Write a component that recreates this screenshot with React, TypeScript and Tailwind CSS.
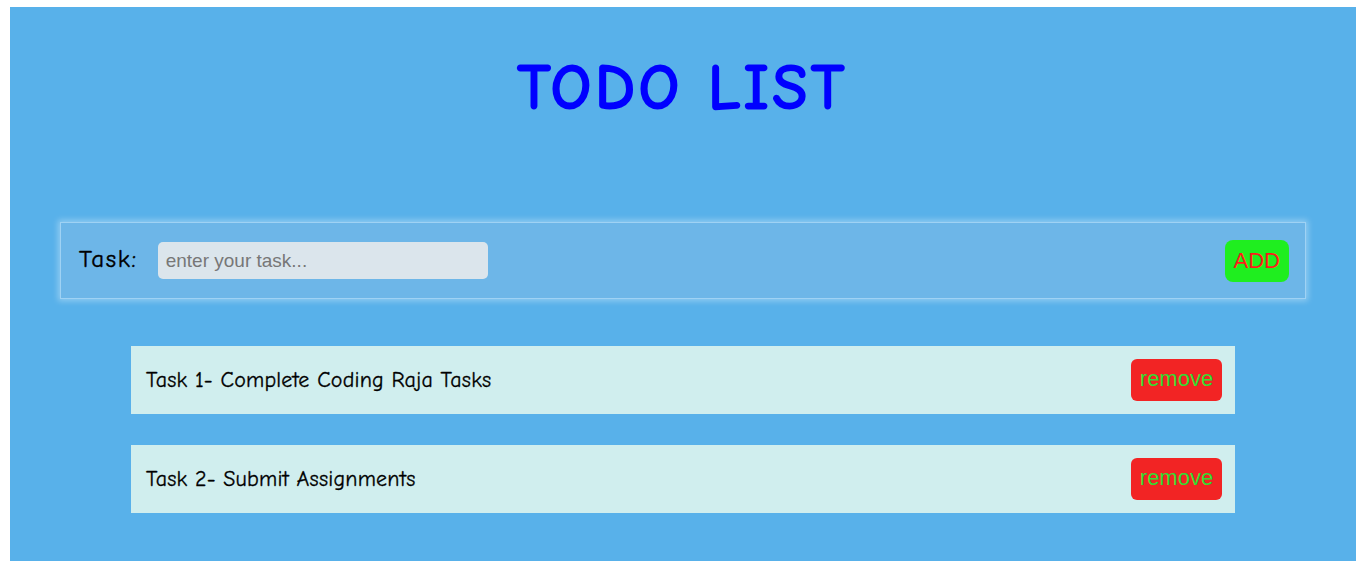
const tasks = ["Task 1- Complete Coding Raja Tasks", "Task 2- Submit Assignments"]

const comic = "font-['Comic_Sans_MS','Comic_Neue',cursive]"

export default function App() {
  return (
    <div className="min-h-screen bg-white px-[10px] pt-[7px] pb-[6px]">
      <main className="flex h-[554px] flex-col bg-[#58b1ea]">
        <h1
          className={`${comic} mt-[46px] text-center text-[62px] leading-[70px] tracking-[4.5px] text-[#0000ff] [-webkit-text-stroke:3px_#0000ff]`}
        >
          TODO LIST
        </h1>

        <div className="mx-[50px] mt-[99px] flex h-[77px] items-center border border-[#9fd2f4] bg-[#6db6e8] pr-4 pl-[18px] shadow-[0_0_6px_2px_rgba(255,255,255,0.35)]">
          <label className={`${comic} -mt-[4px] text-[25px] tracking-[1.6px] text-black [-webkit-text-stroke:0.4px_black]`}>
            Task:
          </label>
          <input
            type="text"
            placeholder="enter your task..."
            className="ml-[20px] h-[37px] w-[330px] rounded-[5px] bg-[#dbe5ec] px-2 font-['Liberation_Sans',Arial,sans-serif] text-[19px] text-black outline-none placeholder:text-[#777]"
          />
          <button className="ml-auto h-[42px] rounded-[8px] bg-[#1fee1f] px-[9px] font-['Liberation_Sans',Arial,sans-serif] text-[22px] text-[#ff1a1a]">
            ADD
          </button>
        </div>

        <ul className="mx-[121px] mt-[47px] flex flex-col gap-[31px]">
          {tasks.map((t) => (
            <li key={t} className="flex h-[68px] items-center justify-between bg-[#d0eeee] pr-[13px] pl-[15px]">
              <span className={`${comic} text-[22px] tracking-[0.2px] text-black [-webkit-text-stroke:0.3px_black]`}>{t}</span>
              <button className="h-[42px] w-[91px] rounded-[6px] bg-[#f22424] pb-[3px] font-['Liberation_Sans',Arial,sans-serif] text-[22px] text-[#33dd33]">
                remove
              </button>
            </li>
          ))}
        </ul>
      </main>
    </div>
  )
}
